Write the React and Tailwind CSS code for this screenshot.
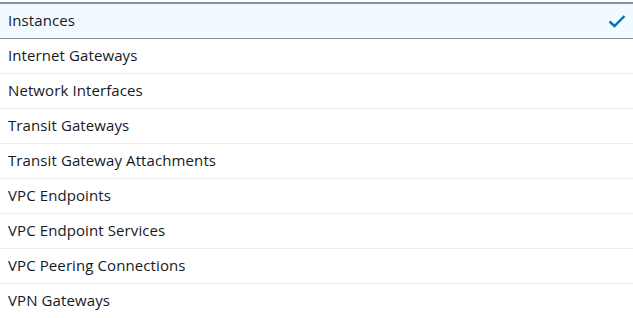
const items = [
  "Instances",
  "Internet Gateways",
  "Network Interfaces",
  "Transit Gateways",
  "Transit Gateway Attachments",
  "VPC Endpoints",
  "VPC Endpoint Services",
  "VPC Peering Connections",
  "VPN Gateways",
];

const Check = () => (
  <svg width="18" height="14" viewBox="0 0 18 14" fill="none">
    <path d="M1.5 7.5l5 4.5L16.5 2" stroke="#0073bb" strokeWidth="2.4" />
  </svg>
);

export default function App() {
  return (
    <div
      className="w-[633px] h-[318px] bg-white overflow-hidden pt-[2px]"
      style={{ fontFamily: "'Open Sans', Arial, sans-serif" }}
    >
      <ul className="border-t-2 border-[#879596]">
        {items.map((item, i) => (
          <li
            key={item}
            className={
              i === 0
                ? "flex items-center justify-between h-[35px] pl-2 pr-[7px] pb-px bg-[#f1faff] border-b border-[#879596] text-[15px] font-medium tracking-[0.1px] text-[#16191f]"
                : "flex items-center h-[35px] pl-2 pb-px border-b border-[#eaeded] text-[15px] font-medium tracking-[0.1px] text-[#16191f]"
            }
          >
            <span>{item}</span>
            {i === 0 && <Check />}
          </li>
        ))}
      </ul>
    </div>
  );
}
